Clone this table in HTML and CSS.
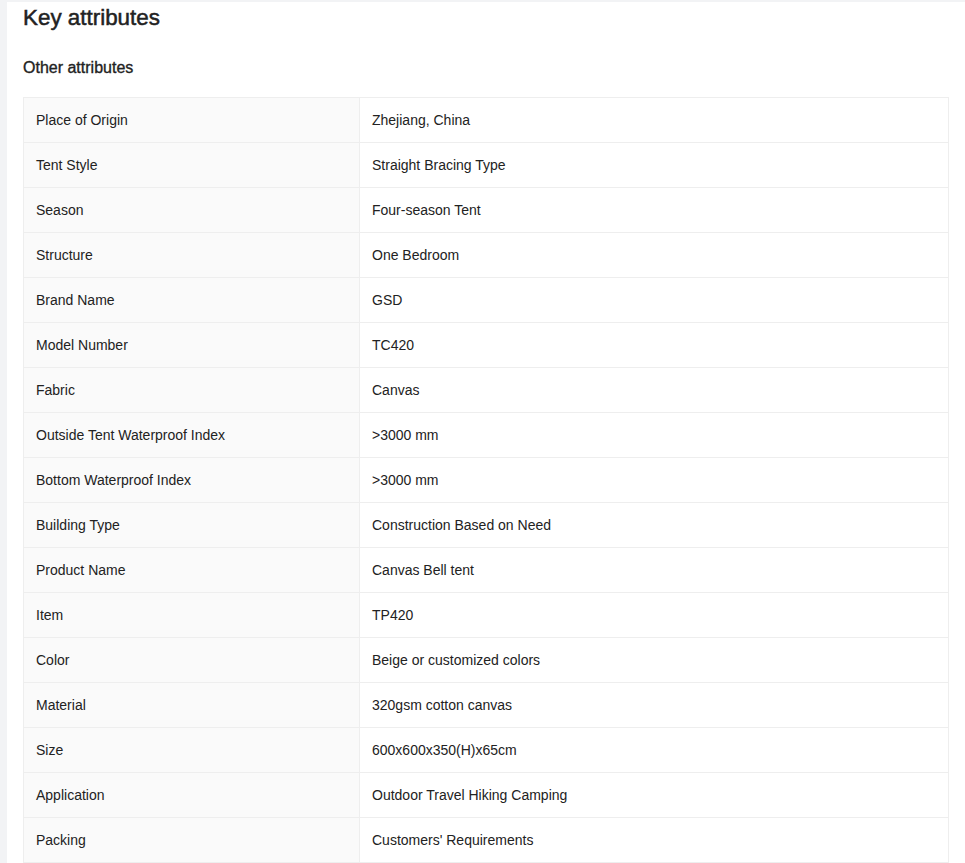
FILE: index.html
```html
<!DOCTYPE html>
<html>
<head>
<meta charset="utf-8">
<link rel="stylesheet" href="styles.css">
</head>
<body>
<div class="card">
  <h1 class="title">Key attributes</h1>
  <h2 class="subtitle">Other attributes</h2>
  <div class="attrs">
    <div class="row"><div class="k">Place of Origin</div><div class="v">Zhejiang, China</div></div>
    <div class="row"><div class="k">Tent Style</div><div class="v">Straight Bracing Type</div></div>
    <div class="row"><div class="k">Season</div><div class="v">Four-season Tent</div></div>
    <div class="row"><div class="k">Structure</div><div class="v">One Bedroom</div></div>
    <div class="row"><div class="k">Brand Name</div><div class="v">GSD</div></div>
    <div class="row"><div class="k">Model Number</div><div class="v">TC420</div></div>
    <div class="row"><div class="k">Fabric</div><div class="v">Canvas</div></div>
    <div class="row"><div class="k">Outside Tent Waterproof Index</div><div class="v">&gt;3000 mm</div></div>
    <div class="row"><div class="k">Bottom Waterproof Index</div><div class="v">&gt;3000 mm</div></div>
    <div class="row"><div class="k">Building Type</div><div class="v">Construction Based on Need</div></div>
    <div class="row"><div class="k">Product Name</div><div class="v">Canvas Bell tent</div></div>
    <div class="row"><div class="k">Item</div><div class="v">TP420</div></div>
    <div class="row"><div class="k">Color</div><div class="v">Beige or customized colors</div></div>
    <div class="row"><div class="k">Material</div><div class="v">320gsm cotton canvas</div></div>
    <div class="row"><div class="k">Size</div><div class="v">600x600x350(H)x65cm</div></div>
    <div class="row"><div class="k">Application</div><div class="v">Outdoor Travel Hiking Camping</div></div>
    <div class="row"><div class="k">Packing</div><div class="v">Customers' Requirements</div></div>
  </div>
</div>
</body>
</html>
```
FILE: styles.css
```css
html, body {
  margin: 0;
  padding: 0;
  background: #f2f3f5;
  font-family: "Liberation Sans", Arial, sans-serif;
  color: #222;
}
body {
  padding: 2px 0 0 7px;
  overflow: hidden;
}
.card {
  background: #fff;
  width: 1000px;
  padding: 0 0 40px 16px;
  box-sizing: border-box;
}
.title {
  margin: 0;
  font-size: 22.4px;
  font-weight: normal;
  -webkit-text-stroke: 0.5px #222;
  line-height: 32px;
}
.subtitle {
  margin: 22px 0 0;
  font-size: 16px;
  font-weight: normal;
  -webkit-text-stroke: 0.35px #222;
  line-height: 24px;
}
.attrs {
  margin-top: 17px;
  width: 926px;
  box-sizing: border-box;
  border-top: 1px solid #eeeeee;
  border-left: 1px solid #eeeeee;
  border-right: 1px solid #eeeeee;
}
.row {
  display: grid;
  grid-template-columns: 336px 1fr;
  height: 45px;
  box-sizing: border-box;
  border-bottom: 1px solid #eeeeee;
}
.k, .v {
  display: flex;
  align-items: center;
  padding-left: 12px;
  font-size: 14px;
}
.k {
  background: #fafafa;
  border-right: 1px solid #eeeeee;
}
```
